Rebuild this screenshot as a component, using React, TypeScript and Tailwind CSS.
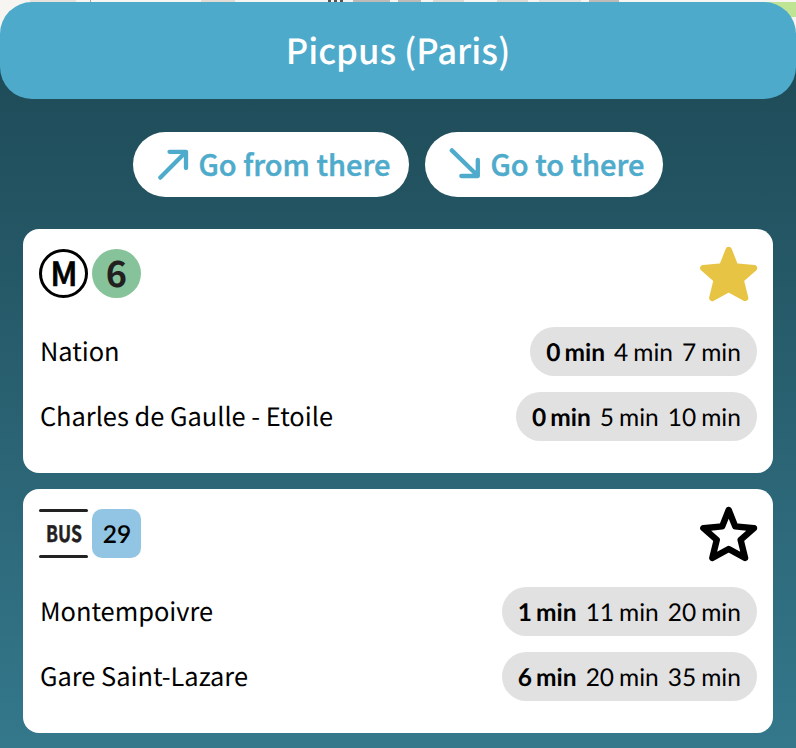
import React from "react";

const STAR =
  "M28.7 5 L35.2 21.4 L54 23.2 L40.6 34.8 L45.1 53 L28.7 44 L12.3 53 L16.8 34.8 L3.4 23.2 L22.2 21.4 Z";

function Star({ filled }: { filled?: boolean }) {
  return (
    <svg width="58" height="58" viewBox="0 0 58 58" className="mt-4 mr-[14.5px] shrink-0">
      <path
        d={STAR}
        fill={filled ? "#e8c444" : "none"}
        stroke={filled ? "#e8c444" : "#000"}
        strokeWidth="6.4"
        strokeLinejoin="round"
      />
    </svg>
  );
}

function Arrow({ down }: { down?: boolean }) {
  return (
    <svg
      width="32"
      height="32"
      viewBox="0 0 32 32"
      fill="none"
      stroke="#4eabcb"
      strokeWidth="4.3"
      strokeLinecap="round"
      strokeLinejoin="round"
      className="shrink-0"
    >
      {down ? (
        <path d="M2.8 2.4 L28.8 27.8 M12.3 28 H28.8 V11.8" />
      ) : (
        <path d="M2.4 29.6 L27.8 4 M11.5 3.8 H28 V20" />
      )}
    </svg>
  );
}

function Times({ values }: { values: number[] }) {
  return (
    <div className="flex h-[49px] items-center gap-[9px] rounded-full bg-[#e1e1e1] pt-[3px] pr-4 pl-4 font-['Lato',sans-serif] text-[24.5px] leading-none text-black">
      {values.map((v, i) => (
        <span key={i} className={i === 0 ? "flex gap-1 font-bold" : "flex gap-[5px]"}>
          <span>{v}</span>
          <span>min</span>
        </span>
      ))}
    </div>
  );
}

function Row({ name, values }: { name: string; values: number[] }) {
  return (
    <div className="flex h-[65px] items-center justify-between pr-4 pl-[16.5px]">
      <span className="pt-px text-[25.4px] leading-none whitespace-nowrap text-black">{name}</span>
      <Times values={values} />
    </div>
  );
}

function Card({
  badges,
  filled,
  rows,
}: {
  badges: React.ReactNode;
  filled?: boolean;
  rows: { name: string; values: number[] }[];
}) {
  return (
    <section className="h-[244px] w-[749.5px] rounded-2xl bg-white">
      <div className="flex h-[90px] items-start justify-between">
        <div className="flex gap-1 pt-5 pl-4">{badges}</div>
        <Star filled={filled} />
      </div>
      {rows.map((r) => (
        <Row key={r.name} {...r} />
      ))}
    </section>
  );
}

export default function App() {
  return (
    <div className="h-[748px] w-[796px] overflow-hidden bg-linear-to-b from-[#1d4753] to-[#34788c] font-['Noto_Sans_CJK_SC',sans-serif] [text-rendering:geometricPrecision]">
      <header className="relative h-[99px] pt-[1.5px]">
        <div className="absolute inset-x-0 top-0 flex h-[45px] justify-end bg-[#f6f5f1]">
          <div className="absolute top-0 left-0 flex h-[2px] w-full">
            <i className="ml-[30px] h-full w-[46px] bg-[#e7e3dc]" />
            <i className="ml-[14px] h-full w-px bg-[#a9a5a1]" />
            <i className="ml-[110px] h-full w-[34px] bg-[#e2dcd5]" />
            <i className="ml-[93px] h-full w-[3px] bg-[#555]" />
            <i className="ml-[3px] h-full w-[3px] bg-[#555]" />
            <i className="ml-[3px] h-full w-[3px] bg-[#555]" />
            <i className="ml-[10px] h-full w-[37px] bg-[#bdbab8]" />
            <i className="ml-[8px] h-full w-[23px] bg-[#bdbab8]" />
            <i className="ml-[12px] h-full w-[31px] bg-[#dedad4]" />
            <i className="ml-[33px] h-full w-[31px] bg-[#dedad4]" />
            <i className="ml-[11px] h-full w-[42px] bg-[#e4e1dc]" />
            <i className="ml-[8px] h-full w-[30px] bg-[#bdbab8]" />
          </div>
          <div className="mt-[2px] h-[15px] w-[34px] bg-[#bfe594]" />
        </div>
        <div className="relative flex h-[97.5px] items-center justify-center rounded-[32px] bg-[#4daaca]">
          <h1 className="pb-[2px] text-[34.7px] leading-none font-medium text-white">
            Picpus (Paris)
          </h1>
        </div>
      </header>

      <div className="flex justify-center gap-4 pt-[32.5px]">
        <button className="flex h-[65px] w-[276px] items-center gap-[8.5px] rounded-full bg-white pl-[25px] text-[29px] leading-none font-medium whitespace-nowrap text-[#4eabcb] [-webkit-text-stroke:0.5px_#4eabcb]">
          <Arrow />
          <span className="pb-[2px]">Go from there</span>
        </button>
        <button className="flex h-[65px] w-[238px] items-center gap-[9.5px] rounded-full bg-white pl-[24px] text-[29px] leading-none font-medium whitespace-nowrap text-[#4eabcb] [-webkit-text-stroke:0.5px_#4eabcb]">
          <Arrow down />
          <span className="pb-[2px]">Go to there</span>
        </button>
      </div>

      <main className="flex flex-col gap-4 pt-[32.5px] pl-[23.4px]">
        <Card
          filled
          badges={
            <>
              <div className="flex size-[49px] items-center justify-center rounded-full border-3 border-black pb-[3px] text-[33px] leading-none font-medium text-black [-webkit-text-stroke:0.7px_#000]">
                M
              </div>
              <div className="flex size-[49px] items-center justify-center rounded-full bg-[#86c29a] pr-px pb-[4px] text-[36px] leading-none font-bold text-[#231f20]">
                6
              </div>
            </>
          }
          rows={[
            { name: "Nation", values: [0, 4, 7] },
            { name: "Charles de Gaulle - Etoile", values: [0, 5, 10] },
          ]}
        />
        <Card
          badges={
            <>
              <div className="flex h-[49px] w-[49px] flex-col items-center justify-between">
                <div className="h-[3px] w-full rounded-full bg-[#222]" />
                <span className="scale-x-[0.78] text-[22.5px] leading-none font-bold text-[#231f20] [-webkit-text-stroke:0.5px_#231f20]">
                  BUS
                </span>
                <div className="h-[3px] w-full rounded-full bg-[#222]" />
              </div>
              <div className="flex size-[49px] items-center justify-center rounded-[10px] bg-[#92c5e3] pt-[3px] font-['Lato',sans-serif] text-[24.5px] leading-none font-semibold text-black">
                29
              </div>
            </>
          }
          rows={[
            { name: "Montempoivre", values: [1, 11, 20] },
            { name: "Gare Saint-Lazare", values: [6, 20, 35] },
          ]}
        />
      </main>
    </div>
  );
}
